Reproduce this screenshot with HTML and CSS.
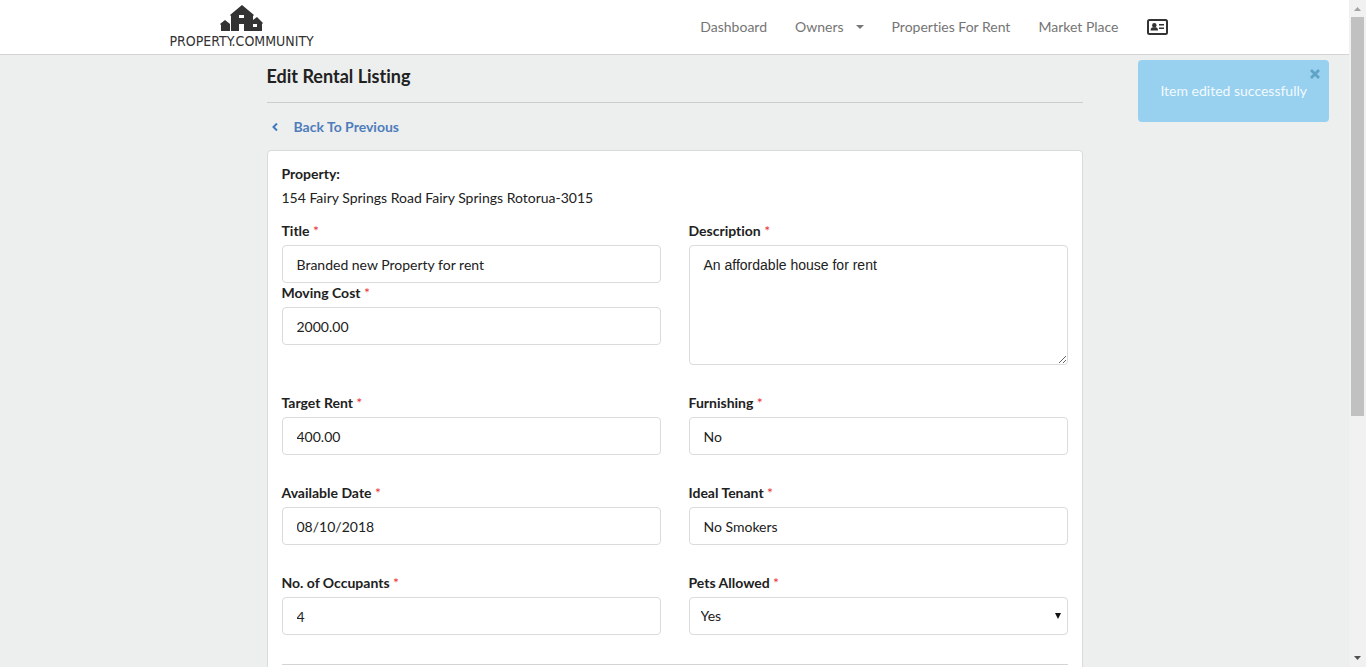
FILE: index.html
```html
<!DOCTYPE html>
<html lang="en">
<head>
<meta charset="utf-8">
<title>Edit Rental Listing</title>
<link rel="stylesheet" href="styles.css">
</head>
<body>
<div class="page">
  <header class="topbar">
    <div class="topbar-inner">
      <a class="logo" href="#">
        <svg class="logo-mark" width="44" height="27" viewBox="0 0 44 27" aria-hidden="true">
          <path fill="#333" fill-rule="evenodd" d="M11 26V11L10 10 22 0l12 10-1 1v4l4-3 6 6-1 1v7H24v-7h-5v7zM19 10v3h5v-3zM33 19v3h4v-3zM1 26v-6l-1-1 5-4 5 4v7z"/>
        </svg>
        <span class="logo-text">PROPERTY.COMMUNITY</span>
      </a>
      <nav class="menu">
        <a href="#">Dashboard</a>
        <a href="#" class="has-menu">Owners
          <svg width="8" height="4" viewBox="0 0 8 4" aria-hidden="true"><path fill="#777" d="M0 0h8L4 4z"/></svg>
        </a>
        <a href="#">Properties For Rent</a>
        <a href="#">Market Place</a>
        <a href="#" class="card-link" aria-label="Account">
          <svg width="21" height="16" viewBox="0 0 21 16" aria-hidden="true">
            <rect x="1" y="1" width="19" height="14" rx="1.5" fill="none" stroke="#333" stroke-width="2"/>
            <circle cx="7.3" cy="6.2" r="2.2" fill="#333"/>
            <path fill="#333" d="M3.6 11.5c0-2.200 1.200-3.200 2.300-3.200h2.800c1.200 0 2.300 1 2.300 3.200zM12 5h5v1.500h-5zM12 8.500h5V10h-5z"/>
          </svg>
        </a>
      </nav>
    </div>
  </header>

  <main class="container">
    <h1 class="title">Edit Rental Listing</h1>
    <a class="back" href="#">
      <svg width="6" height="8" viewBox="0 0 6 8" aria-hidden="true"><path d="M5 .5L1.500 4 5 7.500" fill="none" stroke="#4078c0" stroke-width="2"/></svg>
      Back To Previous
    </a>
    <form class="card">
      <div class="property">
        <strong>Property:</strong>
        <span>154 Fairy Springs Road Fairy Springs Rotorua-3015</span>
      </div>
      <div class="grid">
        <div>
          <div class="field">
            <label for="title">Title <i>*</i></label>
            <input id="title" type="text" value="Branded new Property for rent">
          </div>
          <div class="field">
            <label for="cost">Moving Cost <i>*</i></label>
            <input id="cost" type="text" value="2000.00">
          </div>
        </div>
        <div class="field">
          <label for="desc">Description <i>*</i></label>
          <textarea id="desc">An affordable house for rent</textarea>
        </div>
        <div class="field">
          <label for="rent">Target Rent <i>*</i></label>
          <input id="rent" type="text" value="400.00">
        </div>
        <div class="field">
          <label for="furnish">Furnishing <i>*</i></label>
          <input id="furnish" type="text" value="No">
        </div>
        <div class="field">
          <label for="date">Available Date <i>*</i></label>
          <input id="date" type="text" value="08/10/2018">
        </div>
        <div class="field">
          <label for="tenant">Ideal Tenant <i>*</i></label>
          <input id="tenant" type="text" value="No Smokers">
        </div>
        <div class="field">
          <label for="occupants">No. of Occupants <i>*</i></label>
          <input id="occupants" type="text" value="4">
        </div>
        <div class="field">
          <label for="pets">Pets Allowed <i>*</i></label>
          <div class="select">
            <select id="pets"><option>Yes</option><option>No</option></select>
            <svg width="6" height="6" viewBox="0 0 6 6" aria-hidden="true"><path fill="#111" d="M0 0h6L3 6z"/></svg>
          </div>
        </div>
      </div>
      <hr>
    </form>
  </main>

  <div class="toast" role="status">
    Item edited successfully
    <button type="button" aria-label="Close">
      <svg width="10" height="10" viewBox="0 0 10 10"><path d="M1 1l8 8M9 1L1 9" stroke="#5fa3c6" stroke-width="2.800"/></svg>
    </button>
  </div>
</div>
<div class="scrollbar" aria-hidden="true">
  <svg width="7" height="4" viewBox="0 0 7 4"><path fill="#a3a3a3" d="M0 4h7L3.500 0z"/></svg>
  <div class="track"><div class="thumb"></div></div>
  <svg width="7" height="4" viewBox="0 0 7 4"><path fill="#505050" d="M0 0h7L3.500 4z"/></svg>
</div>
</body>
</html>
```
FILE: styles.css
```css
* { box-sizing: border-box; }

body {
  margin: 0;
  display: flex;
  height: 100vh;
  overflow: hidden;
  background: #edefee;
  color: #212121;
  font: 14px/20px Lato, sans-serif;
  font-variant-ligatures: none;
}

a { text-decoration: none; }
svg { display: block; flex: none; }

.page {
  position: relative;
  flex: 1;
  min-width: 0;
  overflow: hidden;
}

.topbar {
  background: #fff;
  border-bottom: 1px solid #d4d4d5;
}

.topbar-inner {
  display: flex;
  justify-content: space-between;
  align-items: center;
  max-width: 1010px;
  height: 54px;
  margin: 0 auto;
  padding-right: 12px;
}

.logo {
  display: flex;
  flex-direction: column;
  align-items: center;
  color: #333;
}

.logo-text {
  font: 14px/18px "Liberation Sans Narrow", "DejaVu Sans Condensed", sans-serif;
}

.menu {
  display: flex;
  align-items: center;
  gap: 28px;
}

.menu a {
  display: flex;
  align-items: center;
  color: #757575;
}

.menu .has-menu { gap: 12px; }

.container {
  max-width: 816px;
  margin: 0 auto;
  padding-top: 9px;
}

.title {
  margin: 0 0 14px;
  padding-bottom: 14px;
  border-bottom: 1px solid #cccece;
  font-size: 18px;
  line-height: 24px;
  font-weight: 700;
}

.back {
  display: flex;
  align-items: center;
  gap: 16px;
  width: fit-content;
  margin-bottom: 13px;
  padding-left: 5px;
  color: #4f7dbb;
  font-weight: 700;
}

.card {
  padding: 13px 14px;
  background: #fff;
  border: 1px solid #d9dbdb;
  border-radius: 4px;
}

.property {
  display: grid;
  gap: 4px;
  margin-bottom: 13px;
}

.grid {
  display: grid;
  grid-template-columns: 1fr 1fr;
  gap: 28px;
}

label {
  display: block;
  margin-bottom: 4px;
  font-weight: 700;
}

label i {
  color: #e8303a;
  font-style: normal;
  font-weight: 400;
}

input, textarea, select {
  display: block;
  width: 100%;
  height: 38px;
  margin: 0;
  padding: 0 14px;
  background: #fff;
  border: 1px solid #dadbdc;
  border-radius: 4px;
  color: #212121;
  font: inherit;
}

textarea {
  height: 120px;
  padding-top: 9px;
  font-family: "Liberation Sans", sans-serif;
  resize: vertical;
}

.select {
  display: grid;
  align-items: center;
}

.select > * { grid-area: 1 / 1; }
.select select { appearance: none; padding: 0 11px; }

.select svg {
  justify-self: end;
  margin-right: 7px;
  pointer-events: none;
}

hr {
  margin: 29px 0;
  border: 0;
  border-top: 1px solid #d4d4d5;
}

.toast {
  position: absolute;
  top: 60px;
  right: 20px;
  padding: 21px 22px;
  background: #98d1f0;
  border-radius: 4px;
  color: #f2fafe;
}

.toast button {
  position: absolute;
  top: 9px;
  right: 9px;
  padding: 0;
  border: 0;
  background: none;
}

.scrollbar {
  display: flex;
  flex-direction: column;
  align-items: center;
  gap: 6px;
  width: 17px;
  padding: 7px 0;
  background: #f1f1f1;
}

.track { flex: 1; }

.thumb {
  width: 13px;
  height: 63%;
  background: #c1c1c1;
}
```
